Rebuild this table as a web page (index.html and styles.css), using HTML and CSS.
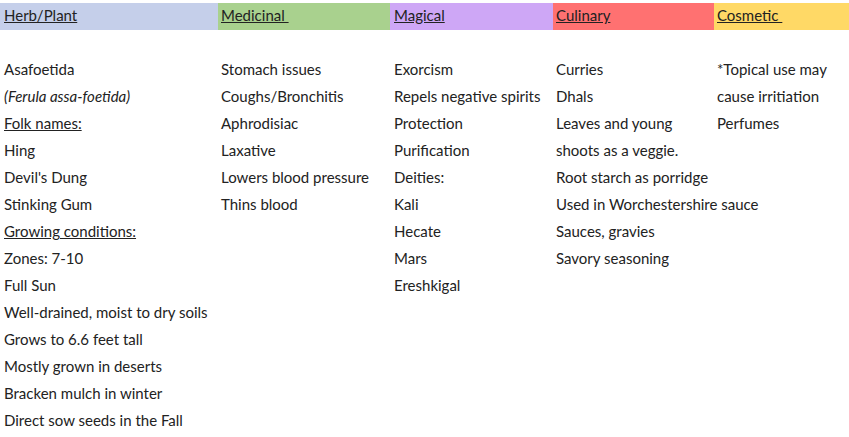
FILE: index.html
```html
<!DOCTYPE html>
<html>
<head>
<meta charset="utf-8">
<link rel="stylesheet" href="styles.css">
</head>
<body>
<div class="sheet">
  <div class="head">
    <div class="hcell herb"><span class="u">Herb/Plant</span></div>
    <div class="hcell med"><span class="u">Medicinal&nbsp;</span></div>
    <div class="hcell mag"><span class="u">Magical</span></div>
    <div class="hcell cul"><span class="u">Culinary</span></div>
    <div class="hcell cos"><span class="u">Cosmetic&nbsp;</span></div>
  </div>
  <div class="spacer"></div>
  <div class="body">
    <div class="col">
      <div class="line">Asafoetida</div>
      <div class="line i">(Ferula assa-foetida)</div>
      <div class="line"><span class="u">Folk names:</span></div>
      <div class="line">Hing</div>
      <div class="line">Devil's Dung</div>
      <div class="line">Stinking Gum</div>
      <div class="line"><span class="u">Growing conditions:</span></div>
      <div class="line">Zones: 7-10</div>
      <div class="line">Full Sun</div>
      <div class="line">Well-drained, moist to dry soils</div>
      <div class="line">Grows to 6.6 feet tall</div>
      <div class="line">Mostly grown in deserts</div>
      <div class="line">Bracken mulch in winter</div>
      <div class="line">Direct sow seeds in the Fall</div>
    </div>
    <div class="col">
      <div class="line">Stomach issues</div>
      <div class="line">Coughs/Bronchitis</div>
      <div class="line">Aphrodisiac</div>
      <div class="line">Laxative</div>
      <div class="line">Lowers blood pressure</div>
      <div class="line">Thins blood</div>
    </div>
    <div class="col">
      <div class="line">Exorcism</div>
      <div class="line">Repels negative spirits</div>
      <div class="line">Protection</div>
      <div class="line">Purification</div>
      <div class="line">Deities:</div>
      <div class="line">Kali</div>
      <div class="line">Hecate</div>
      <div class="line">Mars</div>
      <div class="line">Ereshkigal</div>
    </div>
    <div class="col">
      <div class="line">Curries</div>
      <div class="line">Dhals</div>
      <div class="line">Leaves and young</div>
      <div class="line">shoots as a veggie.</div>
      <div class="line">Root starch as porridge</div>
      <div class="line">Used in Worchestershire sauce</div>
      <div class="line">Sauces, gravies</div>
      <div class="line">Savory seasoning</div>
    </div>
    <div class="col">
      <div class="line">*Topical use may</div>
      <div class="line">cause irritiation</div>
      <div class="line">Perfumes</div>
    </div>
  </div>
</div>
</body>
</html>
```
FILE: styles.css
```css
html, body {
  margin: 0;
  padding: 0;
  background: #ffffff;
}
.sheet {
  padding-top: 3px;
  font-family: Lato, "Liberation Sans", sans-serif;
  font-size: 15px;
  color: #222222;
}
.head, .body {
  display: grid;
  grid-template-columns: 218px 172px 163px 161px 135px;
}
.hcell {
  height: 27px;
  line-height: 25px;
  padding-left: 4px;
  white-space: nowrap;
  box-sizing: border-box;
}
.herb { background: #c5cfea; }
.med { background: #a9d18e; padding-left: 3px; }
.mag { background: #cea7f6; }
.cul { background: #ff7171; padding-left: 3px; }
.cos { background: #ffd966; padding-left: 3px; }
.spacer { height: 27px; }
.col {
  display: flex;
  flex-direction: column;
  padding-left: 4px;
  min-width: 0;
}
.col:nth-child(2) { padding-left: 3px; }
.col:nth-child(4) { padding-left: 3px; }
.col:nth-child(5) { padding-left: 3px; }
.line {
  height: 27px;
  line-height: 25px;
  white-space: nowrap;
}
.u { text-decoration: underline; }
.i { font-style: italic; }
```
